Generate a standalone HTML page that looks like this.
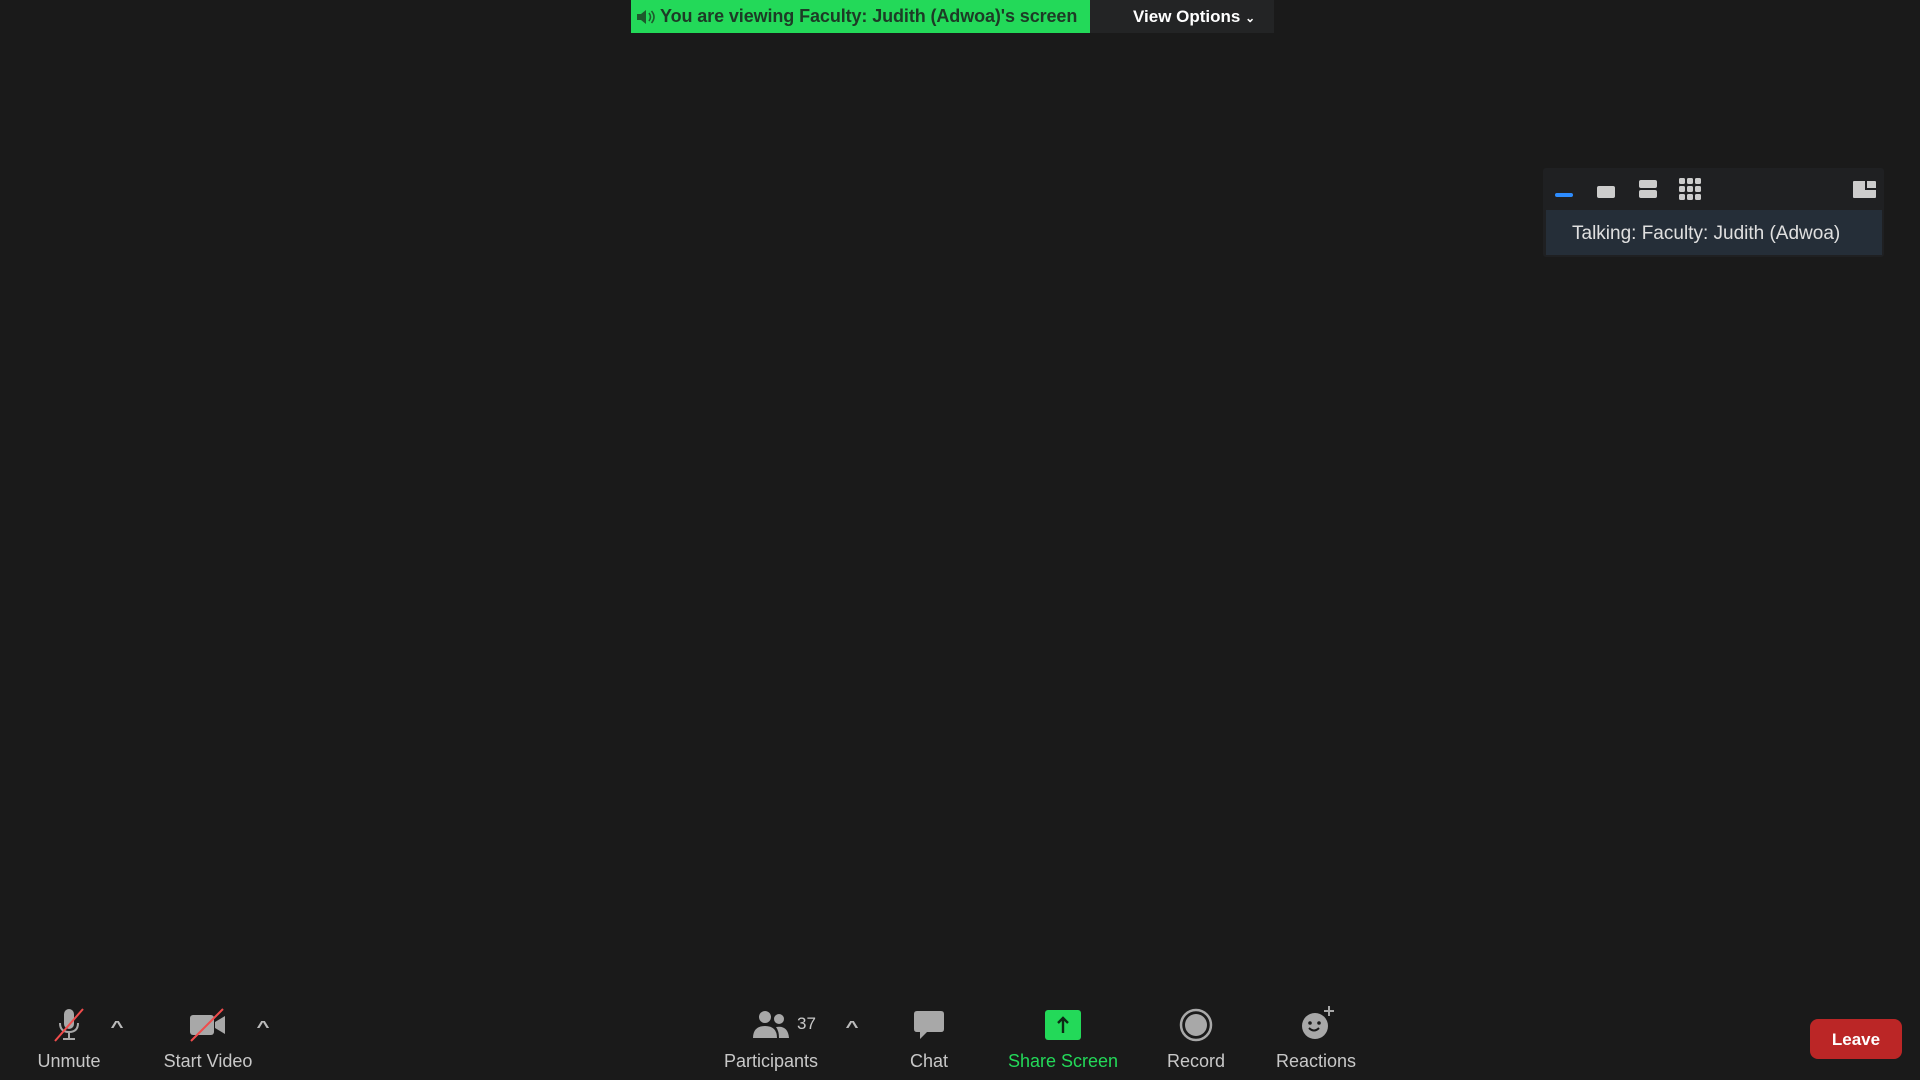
<!DOCTYPE html>
<html><head><meta charset="utf-8"><style>
*{margin:0;padding:0;box-sizing:border-box}
body{width:1920px;height:1080px;background:#1a1a1a;position:relative;overflow:hidden;font-family:"Liberation Sans",sans-serif}
.abs{position:absolute}
.lbl{position:absolute;top:1051px;font-size:18px;color:#c8c8c8;transform:translateX(-50%);white-space:nowrap}
.ic{position:absolute;transform:translate(-50%,-50%)}
.car{position:absolute;color:#bbb;font-size:16px;font-weight:bold;transform:translate(-50%,-50%) scaleX(1.4)}
</style></head><body>
<div class="abs" style="left:631px;top:0;width:459px;height:33px;background:#23d959;color:#1d3b26;font-weight:bold;font-size:18px;line-height:33px;padding-left:29px;white-space:nowrap;letter-spacing:-0.1px">You are viewing Faculty: Judith (Adwoa)'s screen</div>
<svg class="abs" style="left:636px;top:9px" width="20" height="16" viewBox="0 0 20 16"><path d="M1 5h4l5-4v14l-5-4H1z" fill="#1d5a2c"/><path d="M13 4q3 4 0 8M15.5 2q5 6 0 12" stroke="#1d5a2c" stroke-width="1.6" fill="none"/></svg>
<div class="abs" style="left:1090px;top:0;width:184px;height:33px;background:#232425;color:#fff;font-weight:bold;font-size:17px;line-height:33px;padding-left:43px">View Options <span style="font-size:12px">&#8964;</span></div>

<div class="abs" style="left:1543px;top:168px;width:341px;height:89px;background:#1f2022;border-radius:3px"></div>
<div class="abs" style="left:1555px;top:193px;width:18px;height:4px;background:#2d8cff;border-radius:2px"></div>
<div class="abs" style="left:1597px;top:186px;width:18px;height:12px;background:#ccc;border-radius:2px"></div>
<div class="abs" style="left:1639px;top:180px;width:18px;height:8px;background:#ccc;border-radius:2px"></div>
<div class="abs" style="left:1639px;top:190px;width:18px;height:8px;background:#ccc;border-radius:2px"></div>
<svg class="abs" style="left:1679px;top:178px" width="22" height="22"><g fill="#ccc"><rect x="0" y="0" width="6" height="6" rx="1.5"/><rect x="8" y="0" width="6" height="6" rx="1.5"/><rect x="16" y="0" width="6" height="6" rx="1.5"/><rect x="0" y="8" width="6" height="6" rx="1.5"/><rect x="8" y="8" width="6" height="6" rx="1.5"/><rect x="16" y="8" width="6" height="6" rx="1.5"/><rect x="0" y="16" width="6" height="6" rx="1.5"/><rect x="8" y="16" width="6" height="6" rx="1.5"/><rect x="16" y="16" width="6" height="6" rx="1.5"/></g></svg>
<svg class="abs" style="left:1852px;top:180px" width="25" height="19"><path d="M1 2q0-1 1-1h11v9h11v7q0 1-1 1H2q-1 0-1-1z M15 1h8q1 0 1 1v6h-9z" fill="#ccc"/></svg>
<div class="abs" style="left:1546px;top:210px;width:336px;height:45px;background:#252e38;color:#e0e0e0;font-size:19px;line-height:47px;padding-left:26px">Talking: Faculty: Judith (Adwoa)</div>

<svg class="ic" style="left:69px;top:1025px" width="36" height="36" viewBox="0 0 36 36"><rect x="13" y="2" width="10" height="20" rx="5" fill="#a8a8a8"/><path d="M9 16q0 9 9 9t9-9M18 25v6M12 32h12" stroke="#a8a8a8" stroke-width="2" fill="none"/><path d="M4 34L32 2" stroke="#f04c4c" stroke-width="2"/></svg>
<div class="car" style="left:117px;top:1028px">^</div>
<div class="lbl" style="left:69px">Unmute</div>
<svg class="ic" style="left:208px;top:1025px" width="40" height="34" viewBox="0 0 40 34"><rect x="2" y="7" width="24" height="20" rx="3" fill="#a8a8a8"/><path d="M27 14l10-6v18l-10-6z" fill="#a8a8a8"/><path d="M3 33L35 1" stroke="#f04c4c" stroke-width="2"/></svg>
<div class="car" style="left:263px;top:1028px">^</div>
<div class="lbl" style="left:208px">Start Video</div>

<svg class="ic" style="left:771px;top:1025px" width="38" height="30" viewBox="0 0 38 30"><circle cx="13" cy="7" r="6" fill="#a8a8a8"/><path d="M1 28q0-12 12-12t12 12z" fill="#a8a8a8"/><circle cx="27" cy="9" r="5" fill="#a8a8a8"/><path d="M24 17q12-2 13 11H27q0-7-3-11z" fill="#a8a8a8"/></svg>
<div class="abs" style="left:797px;top:1014px;color:#c8c8c8;font-size:17px">37</div>
<div class="car" style="left:852px;top:1028px">^</div>
<div class="lbl" style="left:771px">Participants</div>
<svg class="ic" style="left:929px;top:1025px" width="32" height="32" viewBox="0 0 32 32"><path d="M4 2h24q3 0 3 3v15q0 3-3 3H14l-7 7v-7H4q-3 0-3-3V5q0-3 3-3z" fill="#a8a8a8"/></svg>
<div class="lbl" style="left:929px">Chat</div>
<svg class="ic" style="left:1063px;top:1025px" width="36" height="30" viewBox="0 0 36 30"><rect x="0" y="0" width="36" height="30" rx="3" fill="#23d959"/><path d="M18 23V9M13 13l5-5 5 5" stroke="#0d2a15" stroke-width="2.4" fill="none"/></svg>
<div class="lbl" style="left:1063px;color:#23d959">Share Screen</div>
<svg class="ic" style="left:1196px;top:1025px" width="34" height="34" viewBox="0 0 34 34"><circle cx="17" cy="17" r="15" stroke="#a8a8a8" stroke-width="2.5" fill="none"/><circle cx="17" cy="17" r="11" fill="#a8a8a8"/></svg>
<div class="lbl" style="left:1196px">Record</div>
<svg class="ic" style="left:1318px;top:1023px" width="36" height="36" viewBox="0 0 36 36"><circle cx="15" cy="21" r="13" fill="#a8a8a8"/><circle cx="10" cy="18" r="1.8" fill="#1a1a1a"/><circle cx="19" cy="18" r="1.8" fill="#1a1a1a"/><path d="M9 23q5 5 10 0" stroke="#1a1a1a" stroke-width="2" fill="none"/><path d="M29 1v10M24 6h10" stroke="#1a1a1a" stroke-width="5"/><path d="M29 1v10M24 6h10" stroke="#a8a8a8" stroke-width="2"/></svg>
<div class="lbl" style="left:1316px">Reactions</div>

<div class="abs" style="left:1810px;top:1019px;width:92px;height:40px;background:#bb2626;border-radius:8px;color:#fff;font-weight:bold;font-size:17px;line-height:41px;text-align:center">Leave</div>
</body></html>
